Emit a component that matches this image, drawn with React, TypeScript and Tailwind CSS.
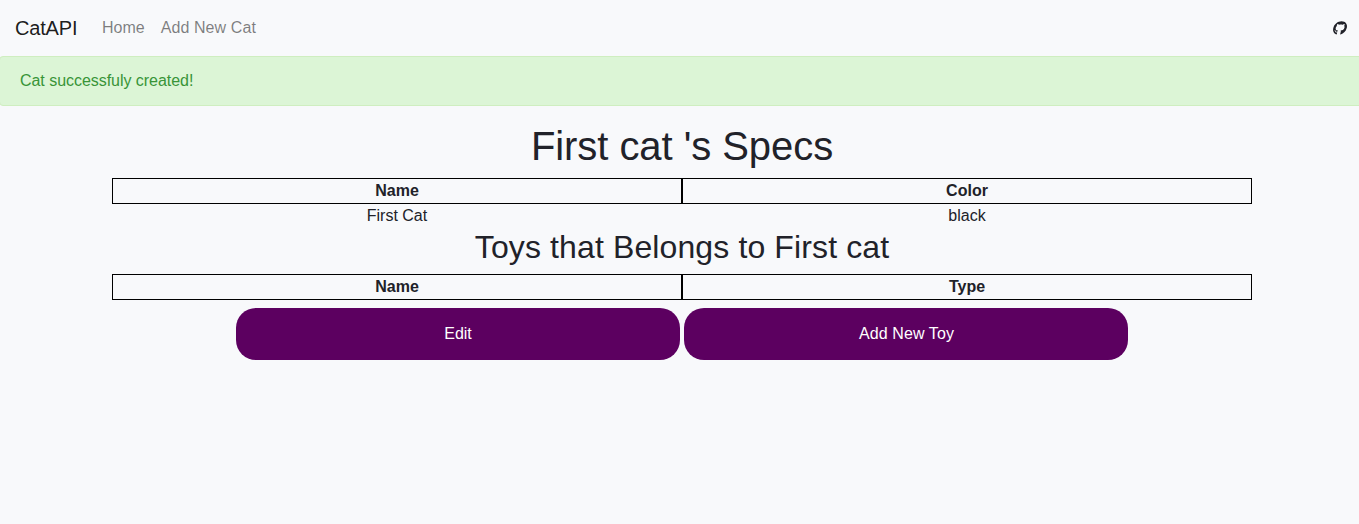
import { FaGithub } from "react-icons/fa";

function SpecTable({ headers, row }: { headers: string[]; row?: string[] }) {
  return (
    <div className="ml-28 w-[1140px]">
      <div className="grid grid-cols-2 font-bold">
        {headers.map((h) => (
          <div key={h} className="h-[26px] border border-black leading-6">{h}</div>
        ))}
      </div>
      {row && (
        <div className="grid grid-cols-2">
          {row.map((c) => (
            <div key={c} className="h-6 leading-6">{c}</div>
          ))}
        </div>
      )}
    </div>
  );
}

export default function App() {
  return (
    <div className="h-[524px] w-[1359px] overflow-hidden bg-[#f8f9fb] font-['Liberation_Sans',sans-serif] text-base text-[#212229]">
      <nav className="flex h-14 items-center pr-3 pl-[15px]">
        <a className="mr-[17px] w-[62px] text-xl leading-[30px] tracking-[-0.18px] whitespace-nowrap text-black/90">CatAPI</a>
        <a className="px-2 leading-6 text-black/50">Home</a>
        <a className="px-2 leading-6 tracking-[0.09px] text-black/50">Add New Cat</a>
        <FaGithub className="ml-auto size-[14px] -skew-x-[14deg]" />
      </nav>
      <div className="-ml-px h-[50px] w-[1365px] rounded border border-[#cfeec0] bg-[#dcf5d6] px-5 py-3 leading-6 tracking-[-0.04px] text-[#389438]">
        Cat successfuly created!
      </div>
      <main className="w-[1364px] text-center">
        <h1 className="pt-4 text-[40px] leading-[48px] tracking-[-0.06px]">First cat 's Specs</h1>
        <div className="pt-2">
          <SpecTable headers={["Name", "Color"]} row={["First Cat", "black"]} />
        </div>
        <h2 className="text-[32px] leading-[38px] tracking-[0.12px]">Toys that Belongs to First cat</h2>
        <div className="pt-2">
          <SpecTable headers={["Name", "Type"]} />
        </div>
        <div className="flex justify-center gap-1 pt-2 text-white">
          <button className="h-[52px] w-[444px] rounded-[20px] bg-[#5c0060]">Edit</button>
          <button className="h-[52px] w-[444px] rounded-[20px] bg-[#5c0060] pl-px tracking-[0.09px]">Add New Toy</button>
        </div>
      </main>
    </div>
  );
}
